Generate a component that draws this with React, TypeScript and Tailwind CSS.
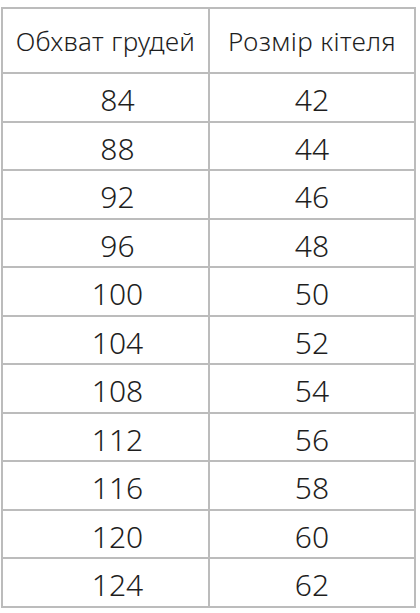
const ROWS: [number, number][] = [
  [84, 42],
  [88, 44],
  [92, 46],
  [96, 48],
  [100, 50],
  [104, 52],
  [108, 54],
  [112, 56],
  [116, 58],
  [120, 60],
  [124, 62],
];

export default function App() {
  return (
    <div
      className="min-h-[613px] w-[420px] bg-white pt-[7px] pl-px text-[#1e1e1e]"
      style={{ fontFamily: '"Noto Sans", "DejaVu Sans", sans-serif' }}
    >
      <table className="w-[415px] border-collapse">
        <thead>
          <tr className="h-[65px]">
            <th className="w-[207px] border-2 border-[#bcbcbc] pt-[2px] text-center text-[26px] font-light tracking-[0.4px]">
              Обхват грудей
            </th>
            <th className="border-2 border-[#bcbcbc] pt-[2px] text-center text-[26px] font-light tracking-[0.4px]">
              Розмір кітеля
            </th>
          </tr>
        </thead>
        <tbody>
          {ROWS.map(([chest, size]) => (
            <tr key={chest} className="h-[48.5px]">
              <td className="border-2 border-[#bcbcbc] pt-[6px] pl-6 text-center text-[30px] font-light leading-none">
                {chest}
              </td>
              <td className="border-2 border-[#bcbcbc] pt-[6px] text-center text-[30px] font-light leading-none">
                {size}
              </td>
            </tr>
          ))}
        </tbody>
      </table>
    </div>
  );
}
